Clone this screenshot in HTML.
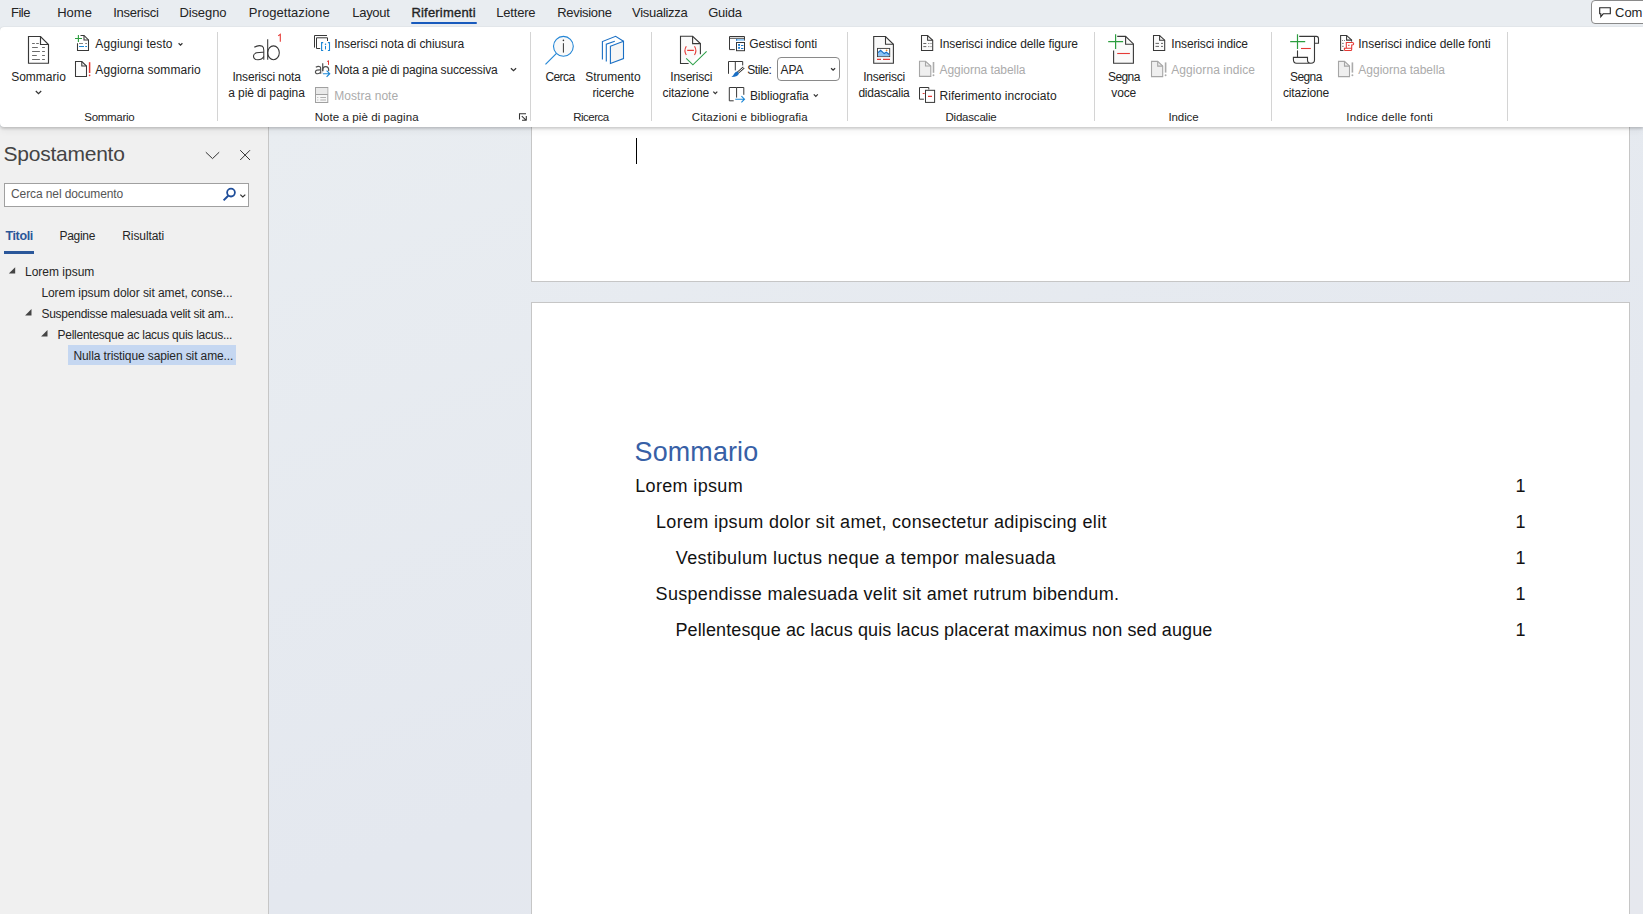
<!DOCTYPE html>
<html><head><meta charset="utf-8"><style>
html,body{margin:0;padding:0}
body{width:1643px;height:914px;overflow:hidden;position:relative;background:#e9edf1;font-family:"Liberation Sans",sans-serif}
.t{position:absolute;line-height:1;white-space:nowrap}
.ic{position:absolute;overflow:visible}
#nav{position:absolute;left:0;top:127px;width:268px;height:787px;background:#f0f0f0;border-right:1px solid #c6c6c6}
#doc{position:absolute;left:269px;top:127px;width:1374px;height:787px;background:linear-gradient(160deg,#e9edf1 0%,#e4e8ef 60%,#e6e8ee 100%)}
.page{position:absolute;background:#fff;border:1px solid #c6c6c6;box-sizing:border-box}
#ribbon{position:absolute;left:0;top:27px;width:1643px;height:100px;background:#fff;border-radius:4px 0 0 4px;box-shadow:0 0 1px rgba(0,0,0,0.12),0 1.5px 2.5px rgba(0,0,0,0.15),0 4px 7px rgba(0,0,0,0.05)}
</style></head><body>
<div id="nav"></div>
<div id="doc"></div>
<div class="page" style="left:531px;top:100px;width:1099px;height:182px"></div>
<div class="page" style="left:531px;top:302px;width:1099px;height:700px"></div>
<div class="t" style="left:11.0px;top:6.0px;font-size:13px;color:#242424;letter-spacing:-0.5px">File</div>
<div class="t" style="left:57.2px;top:6.0px;font-size:13px;color:#242424;letter-spacing:0px">Home</div>
<div class="t" style="left:113.2px;top:6.0px;font-size:13px;color:#242424;letter-spacing:-0.25px">Inserisci</div>
<div class="t" style="left:179.4px;top:6.0px;font-size:13px;color:#242424;letter-spacing:-0.1px">Disegno</div>
<div class="t" style="left:248.8px;top:6.0px;font-size:13px;color:#242424;letter-spacing:0.05px">Progettazione</div>
<div class="t" style="left:352.3px;top:6.0px;font-size:13px;color:#242424;letter-spacing:-0.3px">Layout</div>
<div class="t" style="left:411.4px;top:6.0px;font-size:13px;color:#242424;letter-spacing:0.2px;-webkit-text-stroke:0.35px #242424">Riferimenti</div>
<div class="t" style="left:496.3px;top:6.0px;font-size:13px;color:#242424;letter-spacing:-0.2px">Lettere</div>
<div class="t" style="left:557.2px;top:6.0px;font-size:13px;color:#242424;letter-spacing:-0.3px">Revisione</div>
<div class="t" style="left:632.1px;top:6.0px;font-size:13px;color:#242424;letter-spacing:-0.3px">Visualizza</div>
<div class="t" style="left:708.2px;top:6.0px;font-size:13px;color:#242424;letter-spacing:-0.25px">Guida</div>
<div style="position:absolute;left:411px;top:22px;width:66px;height:2px;background:#185abd;border-radius:1px"></div>
<div style="position:absolute;left:1591px;top:0px;width:80px;height:24px;border:1px solid #8a8a8a;border-radius:4px;background:#fff;box-sizing:border-box"></div>
<svg class="ic" style="left:1599px;top:7px" width="12" height="11" viewBox="0 0 12 11"><path d="M0.7 0.7H11.3V6.8H4.2L1.8 9.8V6.8H0.7Z" fill="none" stroke="#242424" stroke-width="1.1"/></svg>
<div class="t" style="left:1615.0px;top:6.0px;font-size:13px;color:#242424;">Com</div>
<div id="ribbon"></div>
<div style="position:absolute;left:217px;top:32px;width:1px;height:89px;background:#d4d4d4"></div>
<div style="position:absolute;left:530px;top:32px;width:1px;height:89px;background:#d4d4d4"></div>
<div style="position:absolute;left:651px;top:32px;width:1px;height:89px;background:#d4d4d4"></div>
<div style="position:absolute;left:847px;top:32px;width:1px;height:89px;background:#d4d4d4"></div>
<div style="position:absolute;left:1094px;top:32px;width:1px;height:89px;background:#d4d4d4"></div>
<div style="position:absolute;left:1271px;top:32px;width:1px;height:89px;background:#d4d4d4"></div>
<div style="position:absolute;left:1507px;top:32px;width:1px;height:89px;background:#d4d4d4"></div>
<div class="t" style="left:-40.7px;width:300px;text-align:center;top:111.8px;font-size:11.5px;color:#242424;letter-spacing:-0.3px">Sommario</div>
<div class="t" style="left:216.7px;width:300px;text-align:center;top:111.8px;font-size:11.5px;color:#242424;letter-spacing:0.08px">Note a piè di pagina</div>
<div class="t" style="left:440.9px;width:300px;text-align:center;top:111.8px;font-size:11.5px;color:#242424;letter-spacing:-0.5px">Ricerca</div>
<div class="t" style="left:599.8px;width:300px;text-align:center;top:111.8px;font-size:11.5px;color:#242424;letter-spacing:0.15px">Citazioni e bibliografia</div>
<div class="t" style="left:821.0px;width:300px;text-align:center;top:111.8px;font-size:11.5px;color:#242424;letter-spacing:-0.2px">Didascalie</div>
<div class="t" style="left:1033.5px;width:300px;text-align:center;top:111.8px;font-size:11.5px;color:#242424;letter-spacing:-0.13px">Indice</div>
<div class="t" style="left:1239.7px;width:300px;text-align:center;top:111.8px;font-size:11.5px;color:#242424;letter-spacing:0.2px">Indice delle fonti</div>
<div class="t" style="left:-111.5px;width:300px;text-align:center;top:71.3px;font-size:12px;color:#242424;letter-spacing:0px">Sommario</div>
<div class="t" style="left:95.3px;top:37.8px;font-size:12px;color:#242424;letter-spacing:0.09px">Aggiungi testo</div>
<div class="t" style="left:95.3px;top:63.8px;font-size:12px;color:#242424;letter-spacing:0.09px">Aggiorna sommario</div>
<div class="t" style="left:116.6px;width:300px;text-align:center;top:70.8px;font-size:12px;color:#242424;letter-spacing:-0.17px">Inserisci nota</div>
<div class="t" style="left:116.5px;width:300px;text-align:center;top:86.8px;font-size:12px;color:#242424;letter-spacing:-0.11px">a piè di pagina</div>
<div class="t" style="left:334.3px;top:37.8px;font-size:12px;color:#242424;letter-spacing:-0.09px">Inserisci nota di chiusura</div>
<div class="t" style="left:334.3px;top:63.8px;font-size:12px;color:#242424;letter-spacing:-0.18px">Nota a piè di pagina successiva</div>
<div class="t" style="left:334.3px;top:89.8px;font-size:12px;color:#ababab;letter-spacing:0.05px">Mostra note</div>
<div class="t" style="left:410.0px;width:300px;text-align:center;top:70.8px;font-size:12px;color:#242424;letter-spacing:-0.6px">Cerca</div>
<div class="t" style="left:462.9px;width:300px;text-align:center;top:70.8px;font-size:12px;color:#242424;letter-spacing:0px">Strumento</div>
<div class="t" style="left:463.2px;width:300px;text-align:center;top:86.8px;font-size:12px;color:#242424;letter-spacing:-0.14px">ricerche</div>
<div class="t" style="left:541.3px;width:300px;text-align:center;top:70.8px;font-size:12px;color:#242424;letter-spacing:-0.22px">Inserisci</div>
<div class="t" style="left:535.8px;width:300px;text-align:center;top:86.8px;font-size:12px;color:#242424;letter-spacing:-0.1px">citazione</div>
<div class="t" style="left:749.3px;top:37.8px;font-size:12px;color:#242424;letter-spacing:-0.07px">Gestisci fonti</div>
<div class="t" style="left:747.3px;top:63.8px;font-size:12px;color:#242424;letter-spacing:-0.45px">Stile:</div>
<div class="t" style="left:749.9px;top:89.8px;font-size:12px;color:#242424;letter-spacing:-0.05px">Bibliografia</div>
<div style="position:absolute;left:777px;top:57px;width:63px;height:24px;border:1px solid #8a8a8a;border-radius:4px;box-sizing:border-box;background:#fff"></div>
<div class="t" style="left:780.5px;top:63.8px;font-size:12px;color:#242424;letter-spacing:0px">APA</div>
<div class="t" style="left:734.0px;width:300px;text-align:center;top:70.8px;font-size:12px;color:#242424;letter-spacing:-0.27px">Inserisci</div>
<div class="t" style="left:734.0px;width:300px;text-align:center;top:86.8px;font-size:12px;color:#242424;letter-spacing:-0.22px">didascalia</div>
<div class="t" style="left:939.5px;top:37.8px;font-size:12px;color:#242424;letter-spacing:-0.08px">Inserisci indice delle figure</div>
<div class="t" style="left:939.5px;top:63.8px;font-size:12px;color:#ababab;letter-spacing:-0.05px">Aggiorna tabella</div>
<div class="t" style="left:939.5px;top:89.8px;font-size:12px;color:#242424;letter-spacing:0.05px">Riferimento incrociato</div>
<div class="t" style="left:973.9px;width:300px;text-align:center;top:70.8px;font-size:12px;color:#242424;letter-spacing:-0.6px">Segna</div>
<div class="t" style="left:973.7px;width:300px;text-align:center;top:86.8px;font-size:12px;color:#242424;letter-spacing:-0.15px">voce</div>
<div class="t" style="left:1171.3px;top:37.8px;font-size:12px;color:#242424;letter-spacing:-0.13px">Inserisci indice</div>
<div class="t" style="left:1171.3px;top:63.8px;font-size:12px;color:#ababab;letter-spacing:0.07px">Aggiorna indice</div>
<div class="t" style="left:1155.9px;width:300px;text-align:center;top:70.8px;font-size:12px;color:#242424;letter-spacing:-0.6px">Segna</div>
<div class="t" style="left:1156.0px;width:300px;text-align:center;top:86.8px;font-size:12px;color:#242424;letter-spacing:-0.15px">citazione</div>
<div class="t" style="left:1358.3px;top:37.8px;font-size:12px;color:#242424;letter-spacing:-0.04px">Inserisci indice delle fonti</div>
<div class="t" style="left:1358.3px;top:63.8px;font-size:12px;color:#ababab;letter-spacing:0px">Aggiorna tabella</div>
<div class="t" style="left:3.6px;top:143.2px;font-size:21px;color:#444444;letter-spacing:-0.25px">Spostamento</div>
<div style="position:absolute;left:4px;top:183px;width:245px;height:24px;border:1px solid #a0a0a0;box-sizing:border-box;background:#fff"></div>
<div class="t" style="left:11.0px;top:188.3px;font-size:12px;color:#555555;letter-spacing:-0.1px">Cerca nel documento</div>
<div class="t" style="left:5.4px;top:229.7px;font-size:12.5px;color:#2b579a;font-weight:bold;letter-spacing:-0.35px">Titoli</div>
<div style="position:absolute;left:4px;top:251px;width:30px;height:3px;background:#2b579a"></div>
<div class="t" style="left:59.5px;top:230.1px;font-size:12px;color:#262626;letter-spacing:-0.3px">Pagine</div>
<div class="t" style="left:122.3px;top:230.1px;font-size:12px;color:#262626;letter-spacing:-0.1px">Risultati</div>
<div style="position:absolute;left:68px;top:345px;width:168px;height:20px;background:#c5d7f1"></div>
<div class="t" style="left:25.0px;top:265.8px;font-size:12px;color:#262626;letter-spacing:0px">Lorem ipsum</div>
<div class="t" style="left:41.4px;top:286.6px;font-size:12px;color:#262626;letter-spacing:-0.066px">Lorem ipsum dolor sit amet, conse...</div>
<div class="t" style="left:41.4px;top:307.5px;font-size:12px;color:#262626;letter-spacing:-0.24px">Suspendisse malesuada velit sit am...</div>
<div class="t" style="left:57.5px;top:328.5px;font-size:12px;color:#262626;letter-spacing:-0.25px">Pellentesque ac lacus quis lacus...</div>
<div class="t" style="left:73.5px;top:349.5px;font-size:12px;color:#262626;letter-spacing:-0.11px">Nulla tristique sapien sit ame...</div>
<svg class="ic" style="left:0;top:0" width="1643" height="400" viewBox="0 0 1643 400"><path d="M28.5 36.5H40.5L48.5 44.5V63.2H28.5Z" stroke="#383838" stroke-width="1.15" fill="#fff" /><path d="M40.5 36.5V44.5H48.5" stroke="#383838" stroke-width="1.15" fill="none" /><path d="M32.1 43.5H34.8M36.2 43.5H38.8M32.1 47.5H37.8M42.1 47.5H44.9M32.1 51.5H39.9M42.1 51.5H44.9M32.1 55.5H36.8M42.1 55.5H44.9M32.1 59.5H39.9M42.1 59.5H44.9" stroke="#5a5a5a" stroke-width="0.9" fill="none" /><path d="M35.8 91L38.5 93.6L41.2 91" stroke="#333" stroke-width="1.25" fill="none" /><path d="M80.5 35.5H84L88.5 40V50.5H77.5V43.3" stroke="#383838" stroke-width="1.05" fill="none" /><path d="M84 35.5V40H88.5" stroke="#383838" stroke-width="1.05" fill="none" /><path d="M75 38.5H82M78.4 35V42" stroke="#2c9e3f" stroke-width="1.1" fill="none" /><path d="M79 43.5H83M85.2 43.5H87" stroke="#777" stroke-width="0.9" fill="none" /><path d="M79 46.5H84M85.2 46.5H87" stroke="#1a86d6" stroke-width="1.1" fill="none" /><path d="M178.6 43.2L180.5 45.1L182.4 43.2" stroke="#333" stroke-width="1.25" fill="none" /><path d="M75.5 61.5H81.8L86.5 66V76.5H75.5Z" stroke="#383838" stroke-width="1.05" fill="#fcfcfc" /><path d="M81.8 61.5V66H86.5" stroke="#383838" stroke-width="1.05" fill="none" /><path d="M89.6 62.2V73" stroke="#e53935" stroke-width="1.5" fill="none" /><circle cx="89.6" cy="75.3" r="0.85" fill="#e53935"/><path d="M254.3 47.3Q258.6 44.6 262.4 46.3Q263.8 47.3 263.8 50.5V59.7" stroke="#363636" stroke-width="1.05" fill="none" /><path d="M263.8 52.2Q260 52 256.5 52.8Q253.4 53.8 253.5 56.2Q253.7 59.8 258 59.8Q262 59.8 263.8 56.5" stroke="#363636" stroke-width="1.05" fill="none" /><path d="M267.7 39.3V59.7" stroke="#363636" stroke-width="1.05" fill="none" /><ellipse cx="273.5" cy="52.8" rx="5.8" ry="6.9" stroke="#363636" stroke-width="1.05" fill="none"/><path d="M278.2 35.9L280.3 34.3V41.8" stroke="#e53935" stroke-width="1.1" fill="none" /><path d="M314.5 47.6V35.5H327" stroke="#383838" stroke-width="1.0" fill="none" /><path d="M320.2 48.5H316.5V37.8H327.5V41" stroke="#383838" stroke-width="1.0" fill="none" /><path d="M323.2 42.6H321.6V50.5H323.2M327.9 42.6H329.5V50.5H327.9" stroke="#1a86d6" stroke-width="1.1" fill="none" /><circle cx="325.5" cy="44.3" r="0.75" fill="#1a86d6"/><path d="M325.5 45.9V49.4" stroke="#1a86d6" stroke-width="1.05" fill="none" /><g transform="translate(315.3 63.2) scale(0.515) translate(-253.3 -39.3)"><path d="M254.3 47.3Q258.6 44.6 262.4 46.3Q263.8 47.3 263.8 50.5V59.7" stroke="#505050" stroke-width="2.3" fill="none" /><path d="M263.8 52.2Q260 52 256.5 52.8Q253.4 53.8 253.5 56.2Q253.7 59.8 258 59.8Q262 59.8 263.8 56.5" stroke="#505050" stroke-width="2.3" fill="none" /><path d="M267.7 39.3V59.7" stroke="#505050" stroke-width="2.3" fill="none" /><ellipse cx="273.5" cy="52.8" rx="5.8" ry="6.9" stroke="#505050" stroke-width="2.3" fill="none"/></g><rect x="322.2" y="71.2" width="9" height="7" fill="#fff"/><path d="M327.1 61.6L328.5 60.7V64.9" stroke="#e53935" stroke-width="1" fill="none" /><path d="M323 73.7H329.5M326.6 70.6L329.7 73.7L326.6 76.8" stroke="#1a86d6" stroke-width="1.15" fill="none" /><path d="M510.9 68.2L513.5 70.6L516.1 68.2" stroke="#333" stroke-width="1.25" fill="none" /><rect x="315.5" y="87.5" width="12.3" height="15" stroke="#a0a0a0" stroke-width="1" fill="#f7f7f7"/><rect x="316" y="88" width="11.3" height="6.3" fill="#e9e9e9"/><path d="M315.5 94.5H327.8" stroke="#a0a0a0" stroke-width="1" fill="none" /><path d="M320.3 97.5H326M320.3 100H326M317.3 97.5H318.3M317.3 100H318.3" stroke="#a8a8a8" stroke-width="0.9" fill="none" /><path d="M519.5 119.4V113.7H526" stroke="#333" stroke-width="1.05" fill="none" /><path d="M521.8 116.2L526 120.2M522 120.3H526.5M526.3 116V120.6" stroke="#333" stroke-width="1.05" fill="none" /><circle cx="563.4" cy="46.3" r="9.9" stroke="#2386d6" stroke-width="1.1" fill="#f9f9f9"/><path d="M545.5 64.3L556.2 53.6" stroke="#2386d6" stroke-width="1.15" fill="none" /><circle cx="563.4" cy="40.4" r="0.8" fill="#333"/><path d="M563.4 43.2V52.6" stroke="#333" stroke-width="1.0" fill="none" /><path d="M602.4 59.6V41.5L615.6 36.3L623.5 41.2" stroke="#1a6fc4" stroke-width="1.1" fill="none" /><path d="M606.3 61.5V44.2L614.8 41.2" stroke="#1a6fc4" stroke-width="1.1" fill="none" /><path d="M610.4 46.2L623.5 41.2V58.5L610.4 63.4Z" stroke="#1a6fc4" stroke-width="1.1" fill="#f6f6f6" /><path d="M688.6 63.5H680.5V36.3H692.6L700.4 43.6V54.3" stroke="#383838" stroke-width="1.1" fill="#fafafa" /><path d="M692.6 36.3V43.6H700.4" stroke="#383838" stroke-width="1.1" fill="none" /><path d="M686.3 46.3Q683.6 50.6 686.3 55M694.5 46.3Q697.2 50.6 694.5 55M687.2 50.4H693.9" stroke="#e53935" stroke-width="1.1" fill="none" /><path d="M686.2 58.4L692.9 64.8L706.6 51.4" stroke="#2ea04a" stroke-width="1.1" fill="none" /><path d="M713.3 91.6L715.3 93.6L717.3 91.6" stroke="#333" stroke-width="1.25" fill="none" /><path d="M734.8 49.6H729.5V36.5H744.5V40.6" stroke="#383838" stroke-width="1" fill="none" /><path d="M729.5 38.3H744.5" stroke="#383838" stroke-width="0.9" fill="none" /><rect x="736.1" y="39.1" width="8.1" height="1.6" fill="#86c3f5"/><rect x="736.1" y="39.1" width="1" height="1.6" fill="#1a6fc4"/><rect x="736.5" y="42.5" width="8" height="8.2" stroke="#383838" stroke-width="1" fill="#fff"/><rect x="738.1" y="44" width="1.9" height="1.9" fill="#1a7ad0"/><rect x="738.1" y="46.9" width="1.9" height="1.9" fill="#1a7ad0"/><path d="M741 45.5H743.4M741 48.5H743.4" stroke="#1a7ad0" stroke-width="1.1" fill="none" /><path d="M728.5 73.8V61.5H742.7V65.4M735.3 61.5V70.4" stroke="#383838" stroke-width="1" fill="none" /><path d="M737.6 72.9L743.8 67.5" stroke="#383838" stroke-width="2.5" fill="none" /><path d="M737.6 72.9L743.8 67.5" stroke="#fff" stroke-width="0.9" fill="none" /><path d="M731.4 77Q733.3 75.8 734.3 73.6Q735.6 71.6 737.2 71.6L738.9 73.3Q738.6 76.9 731.4 77Z" stroke="none" stroke-width="1.0" fill="#1a6fc4" /><path d="M733.7 100.8H729.3V87.5H736.6V97.6M736.6 87.5H743.8V94.8" stroke="#383838" stroke-width="1" fill="none" /><path d="M735.3 99.2H744.4M741.4 96.1L744.5 99.2L741.4 102.3" stroke="#1a86d6" stroke-width="1.1" fill="none" /><path d="M813.8 94.4L815.8 96.4L817.8 94.4" stroke="#333" stroke-width="1.25" fill="none" /><path d="M831.1 68.2L833.1 70.2L835.1 68.2" stroke="#333" stroke-width="1.25" fill="none" /><path d="M873.7 36.5H885.5L893.4 44.3V63.3H873.7Z" stroke="#383838" stroke-width="1.1" fill="#fafafa" /><path d="M885.5 36.5V44.3H893.4" stroke="#383838" stroke-width="1.1" fill="none" /><rect x="877.5" y="48.4" width="12.2" height="8.2" stroke="#383838" stroke-width="0.9" fill="#fff"/><path d="M878 56.2V52.6L880.6 50.3L884.2 53.6L886.3 52.2L889.3 54.5V56.2Z" stroke="none" stroke-width="1.0" fill="#8cc4f4" /><path d="M878 52.6L880.6 50.3L884.2 53.6L886.3 52.2L889.3 54.5" stroke="#1a6fc4" stroke-width="1.2" fill="none" /><circle cx="886.6" cy="50.3" r="0.9" fill="#f08a24"/><path d="M877 59.4H881M883 59.4H890" stroke="#e53935" stroke-width="1.1" fill="none" /><path d="M921.5 35.5H927.6L932.7 40.3V50.5H921.5Z" stroke="#383838" stroke-width="1.05" fill="#fafafa" /><path d="M927.6 35.5V40.3H932.7" stroke="#383838" stroke-width="1.05" fill="none" /><path d="M923.3 43.5H926.3M928.3 43.5H929.3M930.5 43.5H931.5M923.3 46.6H926.3M928.3 46.6H929.3M930.5 46.6H931.5" stroke="#555" stroke-width="0.9" fill="none" /><path d="M919.5 61.3H925.5L930.8 66V76.4H919.5Z" stroke="#a6a6a6" stroke-width="1.1" fill="#efefef" /><path d="M925.5 61.3V66H930.8" stroke="#a6a6a6" stroke-width="1.1" fill="none" /><path d="M933.5 62V72.8" stroke="#ababab" stroke-width="1.6" fill="none" /><circle cx="933.5" cy="75.2" r="0.95" fill="#ababab"/><path d="M923.9 99.2H919.5V87.5H928.8V89.5" stroke="#383838" stroke-width="1" fill="none" /><rect x="925.5" y="90.3" width="9.1" height="12.1" stroke="#383838" stroke-width="1" fill="#fff"/><path d="M922.7 93.5H924.6M928 96.4H932" stroke="#e53935" stroke-width="1.1" fill="none" /><path d="M1113.6 50.4V63.3H1133.4V43.9L1125.6 36.4H1117.2" stroke="#383838" stroke-width="1.1" fill="#fafafa" /><path d="M1125.6 36.4V44.2H1133.4" stroke="#383838" stroke-width="1.1" fill="none" /><path d="M1108.2 41.6H1123.1M1115.6 34.2V48.9" stroke="#2c9e3f" stroke-width="1.2" fill="none" /><path d="M1117.2 53.5H1129.9" stroke="#e53935" stroke-width="1.1" fill="none" /><path d="M1153.5 35.5H1159.6L1164.7 40.2V50.5H1153.5Z" stroke="#383838" stroke-width="1.05" fill="#fafafa" /><path d="M1159.6 35.5V40.2H1164.7" stroke="#383838" stroke-width="1.05" fill="none" /><path d="M1155.5 43.4H1159M1161 43.4H1163M1155.5 46.4H1159M1161 46.4H1163" stroke="#555" stroke-width="0.9" fill="none" /><path d="M1151.5 61.4H1157.7L1162.7 66.1V76.6H1151.5Z" stroke="#a6a6a6" stroke-width="1.1" fill="#efefef" /><path d="M1157.7 61.4V66.1H1162.7" stroke="#a6a6a6" stroke-width="1.1" fill="none" /><path d="M1165.6 62.4V72.6" stroke="#ababab" stroke-width="1.6" fill="none" /><circle cx="1165.6" cy="75.2" r="0.95" fill="#ababab"/><path d="M1299.2 36.4H1316.4Q1318.5 36.4 1318.5 38.8V43.3H1314.5" stroke="#383838" stroke-width="1.1" fill="none" /><path d="M1314.5 36.6V60Q1314.5 63.2 1311 63.2H1296.5Q1293.4 63.2 1293.4 59.5V57.4H1307.5V60Q1307.5 63.2 1311 63.2" stroke="#383838" stroke-width="1.1" fill="#fafafa" /><path d="M1297.5 50.4V57.4" stroke="#383838" stroke-width="1.1" fill="none" /><path d="M1290.2 41.6H1305.2M1297.5 34.2V48.9" stroke="#2c9e3f" stroke-width="1.2" fill="none" /><path d="M1301 48.5H1310.8" stroke="#e53935" stroke-width="1.1" fill="none" /><path d="M1343.8 50.4H1340.6V35.4H1346.6L1351.6 40.1V42" stroke="#383838" stroke-width="1.05" fill="none" /><path d="M1346.6 35.4V40.1H1351.6" stroke="#383838" stroke-width="1.05" fill="none" /><path d="M1342.2 40.5H1343M1344.2 40.5H1345M1342.2 43.4H1345.2M1342.2 46.3H1345.2" stroke="#555" stroke-width="0.9" fill="none" /><rect x="1343.6" y="41.6" width="11" height="9.8" fill="#fff"/><path d="M1346.3 48.2V42.5H1352.3Q1353.7 42.5 1353.7 43.8Q1353.7 45 1352.3 45H1351.7V49.5Q1351.7 50.5 1350.7 50.5H1345.4Q1344.4 50.5 1344.4 49.5V48.2H1351.7" stroke="#e53935" stroke-width="1.05" fill="none" /><path d="M1348 45.3H1349.6" stroke="#e53935" stroke-width="1" fill="none" /><path d="M1338.5 61.4H1344.5L1349.5 66.1V76.6H1338.5Z" stroke="#a6a6a6" stroke-width="1.1" fill="#efefef" /><path d="M1344.5 61.4V66.1H1349.5" stroke="#a6a6a6" stroke-width="1.1" fill="none" /><path d="M1352.4 62.4V72.6" stroke="#ababab" stroke-width="1.6" fill="none" /><circle cx="1352.4" cy="75.2" r="0.95" fill="#ababab"/><path d="M205.8 152.2L212.5 158.6L219.2 152.2" stroke="#333" stroke-width="1.0" fill="none" /><path d="M240.2 150.2L250 160M250 150.2L240.2 160" stroke="#333" stroke-width="1.0" fill="none" /><circle cx="231" cy="192.6" r="3.9" stroke="#1f4e9a" stroke-width="1.8" fill="none"/><path d="M223.6 200.4L228.2 195.8" stroke="#1f4e9a" stroke-width="2.0" fill="none" /><path d="M240.3 194.6L242.8 197L245.3 194.6" stroke="#333" stroke-width="1.25" fill="none" /><path d="M15.200000000000001 267.2V273.59999999999997H8.8Z" fill="#444"/><path d="M31.5 309V315.4H25.1Z" fill="#444"/><path d="M47.5 330V336.4H41.1Z" fill="#444"/></svg>
<div style="position:absolute;left:636px;top:138px;width:1px;height:26px;background:#000"></div>
<div class="t" style="left:634.6px;top:439.0px;font-size:26.9px;color:#3760a6;letter-spacing:0.15px">Sommario</div>
<div class="t" style="left:635.2px;top:476.8px;font-size:18px;color:#121212;letter-spacing:0.35px">Lorem ipsum</div>
<div class="t" style="left:1515.5px;top:476.8px;font-size:18px;color:#121212;">1</div>
<div class="t" style="left:656.0px;top:512.8px;font-size:18px;color:#121212;letter-spacing:0.32px">Lorem ipsum dolor sit amet, consectetur adipiscing elit</div>
<div class="t" style="left:1515.5px;top:512.8px;font-size:18px;color:#121212;">1</div>
<div class="t" style="left:675.8px;top:548.8px;font-size:18px;color:#121212;letter-spacing:0.38px">Vestibulum luctus neque a tempor malesuada</div>
<div class="t" style="left:1515.5px;top:548.8px;font-size:18px;color:#121212;">1</div>
<div class="t" style="left:655.6px;top:584.8px;font-size:18px;color:#121212;letter-spacing:0.31px">Suspendisse malesuada velit sit amet rutrum bibendum.</div>
<div class="t" style="left:1515.5px;top:584.8px;font-size:18px;color:#121212;">1</div>
<div class="t" style="left:675.5px;top:620.8px;font-size:18px;color:#121212;letter-spacing:0.105px">Pellentesque ac lacus quis lacus placerat maximus non sed augue</div>
<div class="t" style="left:1515.5px;top:620.8px;font-size:18px;color:#121212;">1</div>
</body></html>
